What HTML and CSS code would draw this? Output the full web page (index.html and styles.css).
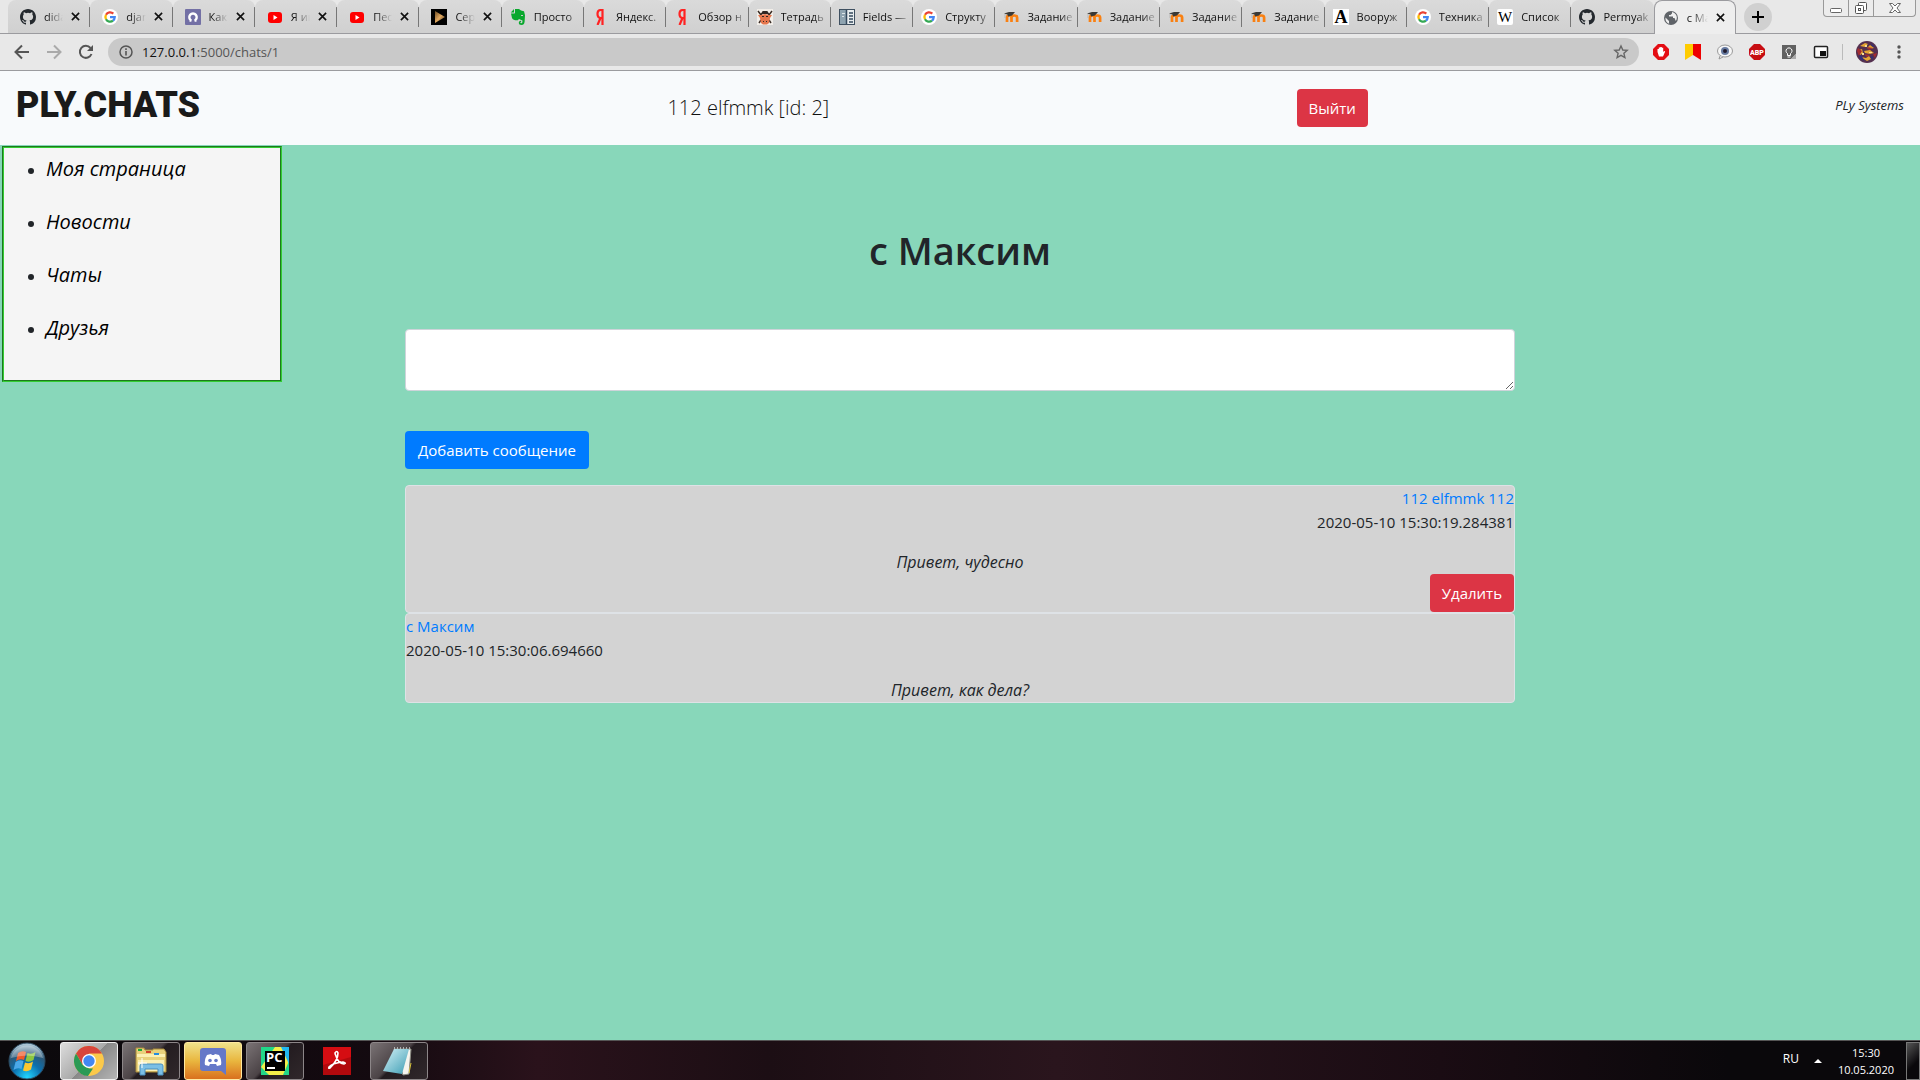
FILE: index.html
```html
<!DOCTYPE html>
<html lang="ru">
<head>
<meta charset="utf-8">
<title>с Максим</title>
<link rel="stylesheet" href="styles.css">
</head>
<body>
<svg class="sprite" aria-hidden="true">
  <defs>
    <linearGradient id="gold" x1="0" y1="0" x2="1" y2="1"><stop offset="0" stop-color="#6b4a22"/><stop offset=".5" stop-color="#e0a860"/><stop offset="1" stop-color="#4a3014"/></linearGradient>
    <linearGradient id="paper" x1="0" y1="0" x2="1" y2="1"><stop offset="0" stop-color="#d4f1f6"/><stop offset="1" stop-color="#3c9db4"/></linearGradient>
    <radialGradient id="orb" cx=".5" cy=".95" r=".9"><stop offset="0" stop-color="#22d6ff"/><stop offset=".45" stop-color="#0b6fae"/><stop offset=".75" stop-color="#2b5878"/><stop offset="1" stop-color="#a9c3d4"/></radialGradient>
  </defs>
  <symbol id="github" viewBox="0 0 16 16"><path fill="#24292e" d="M8 0C3.58 0 0 3.58 0 8c0 3.54 2.29 6.53 5.47 7.59.4.07.55-.17.55-.38 0-.19-.01-.82-.01-1.49-2.01.37-2.53-.49-2.69-.94-.09-.23-.48-.94-.82-1.13-.28-.15-.68-.52-.01-.53.63-.01 1.08.58 1.23.82.72 1.21 1.87.87 2.33.66.07-.52.28-.87.51-1.07-1.78-.2-3.64-.89-3.64-3.95 0-.87.31-1.59.82-2.15-.08-.2-.36-1.02.08-2.12 0 0 .67-.21 2.2.82a7.4 7.4 0 0 1 4 0c1.53-1.04 2.2-.82 2.2-.82.44 1.1.16 1.92.08 2.12.51.56.82 1.27.82 2.15 0 3.07-1.87 3.75-3.65 3.95.29.25.54.73.54 1.48 0 1.07-.01 1.93-.01 2.2 0 .21.15.46.55.38A8.01 8.01 0 0 0 16 8c0-4.42-3.58-8-8-8z"/></symbol>
  <symbol id="google" viewBox="0 0 16 16"><circle cx="8" cy="8" r="8" fill="#fff"/><g fill="none" stroke-width="2.3"><path stroke="#ea4335" d="M4 5.8A4.7 4.7 0 0 1 11.3 4.7"/><path stroke="#fbbc05" d="M4 5.8a4.7 4.7 0 0 0 0 4.4"/><path stroke="#34a853" d="M4 10.2a4.7 4.7 0 0 0 7 1.4"/><path stroke="#4285f4" d="M8 8.2h4.7a4.7 4.7 0 0 1-1.7 3.4"/></g></symbol>
  <symbol id="arch" viewBox="0 0 16 16"><rect width="16" height="16" rx="1" fill="#7370a5"/><path fill="none" stroke="#fff" stroke-width="2.4" d="M4.5 11.5h1.8A3.7 3.7 0 1 1 9.7 11.500h1.8"/></symbol>
  <symbol id="youtube" viewBox="0 0 16 16"><rect x="1" y="3" width="14" height="11" rx="3" fill="#f00"/><path fill="#fff" d="M6.5 6v5l4-2.5z"/></symbol>
  <symbol id="serial" viewBox="0 0 16 16"><rect width="16" height="16"/><path fill="url(#gold)" d="M4 2v12l10-6z"/></symbol>
  <symbol id="evernote" viewBox="0 0 16 16"><path fill="#0aa82e" d="M5 0h4l2 1.500 3 .7 1 4-.4 6.500q-.4 3.300-3 3.300-3 0-2.800-2.500.2-2 2.300-1.800v1.200q-1 0-.9.7.2.7 1.300.6 1.200-.2 1-2.700L9 10l-1.200 1.300Q3 11.500 2 9L1 4.500h3.500L5 4zM4 0v3.600H.8z"/><path stroke="#ccc" d="M11 6.500h2"/></symbol>
  <symbol id="yandex" viewBox="0 0 16 16"><path fill="none" stroke="#f22" stroke-width="2.2" d="M10.500 16V1H9C6.500 1 5.500 3 5.500 5s1 4 3.500 4h1.500M8.500 9l-3 7"/></symbol>
  <symbol id="ox" viewBox="0 0 16 16"><rect width="16" height="16" fill="#f2eee9"/><path stroke="#3a2c25" stroke-width="1.500" d="M1 2l3 4 2-3h4l2 3 3-4M2 14l2-3M14 14l-2-3" fill="none"/><path fill="#e5764d" d="M1 6h3l4-1 4 1h3l-2 3-1 5-2 1.500H6L4 14 3 9z"/><path fill="#302825" d="M4 5l2-3h4l2 3zM5 7h2v1H5zM9 7h2v1H9zM6 12h1v1H6zM9 12h1v1H9z"/></symbol>
  <symbol id="docs" viewBox="0 0 16 16"><rect x=".5" y=".5" width="15" height="15" fill="#e8edef" stroke="#3f5060"/><path fill="#8ea3b0" d="M1 1h6v14H1z"/><path stroke="#34495e" stroke-width="1.500" d="M7.500 1v14M10 4h4M10 7h4M10 10h4M10 13h4"/><path stroke="#dce4e8" d="M3 4.500h3M3 7.500h2"/></symbol>
  <symbol id="moodle" viewBox="0 0 16 16"><path fill="none" stroke="#f98012" stroke-width="2.700" d="M4 13V8.500q0-2 2.200-2 2.300 0 2.300 2V13M8.500 8.500q0-2 2.800-2t2.800 2V13"/><path fill="#3a3936" d="M1 4.500L6 3h6L9 6.500l-4 1-.5-2z"/><path stroke="#aaa" stroke-width=".6" d="M2 5v4"/></symbol>
  <symbol id="globe" viewBox="0 0 16 16"><circle cx="8" cy="8" r="7" fill="#5f6368"/><path fill="#f0f0f0" d="M2.500 7.500l3.500 3.500v2.500l1 .5A6 6 0 0 1 2.500 7.500zM9 2v1.500L7.500 5H6v1.500h4V8h1.500l1.300 3A5.800 5.800 0 0 0 9 2z"/></symbol>
  <symbol id="close" viewBox="0 0 10 10"><path stroke="#111" stroke-width="1.800" d="M1 1l8 8M9 1L1 9"/></symbol>
</svg>

<header class="browser">
  <div class="tabstrip">
    <nav class="tabs" aria-label="Вкладки">
      <div class="tab roomy"><svg class="favicon"><use href="#github"/></svg><span class="tab-title">dida</span><button class="tab-close" aria-label="Закрыть"><svg><use href="#close"/></svg></button></div>
      <div class="tab roomy"><svg class="favicon"><use href="#google"/></svg><span class="tab-title">djan</span><button class="tab-close" aria-label="Закрыть"><svg><use href="#close"/></svg></button></div>
      <div class="tab roomy"><svg class="favicon"><use href="#arch"/></svg><span class="tab-title">Как</span><button class="tab-close" aria-label="Закрыть"><svg><use href="#close"/></svg></button></div>
      <div class="tab roomy"><svg class="favicon"><use href="#youtube"/></svg><span class="tab-title">Я ин</span><button class="tab-close" aria-label="Закрыть"><svg><use href="#close"/></svg></button></div>
      <div class="tab roomy"><svg class="favicon"><use href="#youtube"/></svg><span class="tab-title">Пес</span><button class="tab-close" aria-label="Закрыть"><svg><use href="#close"/></svg></button></div>
      <div class="tab roomy"><svg class="favicon"><use href="#serial"/></svg><span class="tab-title">Сер</span><button class="tab-close" aria-label="Закрыть"><svg><use href="#close"/></svg></button></div>
      <div class="tab"><svg class="favicon"><use href="#evernote"/></svg><span class="tab-title">Просто</span></div>
      <div class="tab"><svg class="favicon"><use href="#yandex"/></svg><span class="tab-title">Яндекс.</span></div>
      <div class="tab"><svg class="favicon"><use href="#yandex"/></svg><span class="tab-title">Обзор н</span></div>
      <div class="tab"><svg class="favicon"><use href="#ox"/></svg><span class="tab-title">Тетрадь</span></div>
      <div class="tab"><svg class="favicon"><use href="#docs"/></svg><span class="tab-title">Fields —</span></div>
      <div class="tab"><svg class="favicon"><use href="#google"/></svg><span class="tab-title">Структу</span></div>
      <div class="tab"><svg class="favicon"><use href="#moodle"/></svg><span class="tab-title">Задание</span></div>
      <div class="tab"><svg class="favicon"><use href="#moodle"/></svg><span class="tab-title">Задание</span></div>
      <div class="tab"><svg class="favicon"><use href="#moodle"/></svg><span class="tab-title">Задание</span></div>
      <div class="tab"><svg class="favicon"><use href="#moodle"/></svg><span class="tab-title">Задание</span></div>
      <div class="tab"><svg class="favicon" viewBox="0 0 16 16"><rect width="16" height="16" fill="#fff"/><text x="8" y="14" text-anchor="middle" font-family="Liberation Serif, serif" font-size="18" font-weight="700">A</text></svg><span class="tab-title">Вооруж</span></div>
      <div class="tab"><svg class="favicon"><use href="#google"/></svg><span class="tab-title">Техника</span></div>
      <div class="tab"><svg class="favicon" viewBox="0 0 16 16"><rect width="16" height="16" rx="2" fill="#fff"/><text x="8" y="13" text-anchor="middle" font-family="Liberation Serif, serif" font-size="15">W</text></svg><span class="tab-title">Список</span></div>
      <div class="tab"><svg class="favicon"><use href="#github"/></svg><span class="tab-title">Permyak</span></div>
      <div class="tab active"><svg class="favicon"><use href="#globe"/></svg><span class="tab-title">с Ма</span><button class="tab-close" aria-label="Закрыть"><svg><use href="#close"/></svg></button></div>
    </nav>
    <button class="new-tab" aria-label="Новая вкладка"><svg width="12" height="12"><path stroke="#000" stroke-width="2" d="M6 0v12M0 6h12"/></svg></button>
    <div class="window-controls">
      <button aria-label="Свернуть"><svg width="14" height="14"><rect x="1.500" y="7.500" width="11" height="4" rx="1" fill="#fff" stroke="#666"/></svg></button>
      <button aria-label="Развернуть"><svg width="14" height="14" fill="#fff" stroke="#555"><rect x="4.500" y="1.500" width="8" height="8" rx="1"/><rect x="1.500" y="4.500" width="8" height="8" rx="1"/><rect x="4.500" y="7.500" width="2" height="2"/></svg></button>
      <button aria-label="Закрыть окно"><svg width="14" height="14"><path fill="#fff" stroke="#666" d="M1.500 2.500h3L7 5l2.500-2.500h3L9 7l3.500 4.500h-3L7 9l-2.500 2.500h-3L5 7z"/></svg></button>
    </div>
  </div>
  <div class="toolbar">
    <div class="nav-buttons">
      <button aria-label="Назад"><svg width="16" height="16" fill="none" stroke="#555" stroke-width="2"><path d="M15 8H2M8 1.500L1.500 8 8 14.500"/></svg></button>
      <button aria-label="Вперёд"><svg width="16" height="16" fill="none" stroke="#aaa" stroke-width="2"><path d="M1 8h13M8 1.500L14.500 8 8 14.500"/></svg></button>
      <button aria-label="Обновить"><svg width="16" height="16"><path fill="none" stroke="#555" stroke-width="2" d="M13.500 10A6 6 0 1 1 12.500 4"/><path fill="#555" d="M15 1v6H9z"/></svg></button>
    </div>
    <div class="omnibox">
      <svg width="16" height="16"><circle cx="8" cy="8" r="6" fill="none" stroke="#555" stroke-width="1.500"/><path stroke="#555" stroke-width="1.600" d="M8 7v4.500M8 4.300v1.600"/></svg>
      <span class="url"><b>127.0.0.1</b>:5000/chats/1</span>
      <svg width="16" height="16"><path fill="none" stroke="#666" stroke-width="1.400" d="M8 2l1.800 4 4.400.4-3.300 2.900 1 4.200L8 11.300l-3.900 2.200 1-4.200-3.300-2.900L6.200 6z"/></svg>
    </div>
    <div class="extensions">
      <button aria-label="AdBlock"><svg width="16" height="16"><path fill="#e40d13" d="M5 0h6l5 5v6l-5 5H5l-5-5V5z"/><path fill="#fff" d="M4.500 8V5h1.300V3.500h1.500V3h1.500v.8h1.400V8l1-.9 1 .5L10 12.500H6z"/></svg></button>
      <button aria-label="Закладки"><svg width="16" height="16"><path fill="#fc0" d="M0 0h8v11l-8 5z"/><path fill="#e00" d="M8 0h8v16l-8-5z"/></svg></button>
      <button aria-label="Просмотр"><svg width="16" height="16"><ellipse cx="8" cy="7" rx="7.500" ry="6" fill="#f6f6f6" stroke="#999"/><path fill="#eee" stroke="#999" d="M3 12l-1 3 4-2"/><circle cx="8" cy="7" r="4" fill="#667aa0"/><circle cx="8" cy="7" r="2" fill="#201a2c"/></svg></button>
      <button aria-label="Adblock Plus"><svg width="16" height="16"><path fill="#c70d12" d="M5 0h6l5 5v6l-5 5H5l-5-5V5z"/><text x="8" y="11" text-anchor="middle" font-family="Roboto, sans-serif" font-size="7" font-weight="900" fill="#fff">ABP</text></svg></button>
      <button aria-label="Подсказки"><svg width="16" height="16"><path fill="#616161" d="M1 1h14v9l-5 5H1z"/><path fill="#aaa" d="M15 10v5h-5z"/><path fill="none" stroke="#fff" d="M6.500 9.500a3 3 0 1 1 3 0v2h-3zM6.500 13h3"/></svg></button>
      <button aria-label="Картинка в картинке"><svg width="16" height="16"><rect x="1.500" y="2.500" width="13" height="11" rx="1" fill="#fff" stroke="#222" stroke-width="1.500"/><path fill="#111" d="M7 7h6v5H7z"/></svg></button>
      <span class="divider"></span>
      <button class="avatar" aria-label="Профиль"><svg width="22" height="22"><circle cx="11" cy="11" r="11" fill="#54304f"/><path fill="#e6a632" d="M4 5l5-3 3 1-3 3zM14 4l4 3-4 1-3-1zM3 9l3-1 1 4-3 2zM8 10l6-1 4 3-4 1-5-1zM5 16l5 1 3-2 2 3-4 2z"/><path fill="#a32c31" d="M2 7l4 3-3 5-2-5zM11 6l6 1-4 2zM8 13l6 1-3 2zM17 13l4-1-2 5z"/><path fill="#30307b" d="M3 14l3 1 2 5-4-2zM15 2l4 4-3-1zM14 15l3 1-1 3z"/><path fill="#f3dc96" d="M9 4h2v2H9zM13 11h3v1h-3zM6 12h2v2H6z"/></svg></button>
      <button aria-label="Меню"><svg width="16" height="16" fill="#555"><circle cx="8" cy="3" r="1.700"/><circle cx="8" cy="8" r="1.700"/><circle cx="8" cy="13" r="1.700"/></svg></button>
    </div>
  </div>
</header>

<div class="page">
  <header class="site-header">
    <a class="brand" href="#">PLY.CHATS</a>
    <span class="user">112 elfmmk [id: 2]</span>
    <button class="btn btn-danger">Выйти</button>
    <span class="company">PLy Systems</span>
  </header>
  <div class="layout">
    <nav class="sidebar">
      <ul>
        <li><a href="#">Моя страница</a></li>
        <li><a href="#">Новости</a></li>
        <li><a href="#">Чаты</a></li>
        <li><a href="#">Друзья</a></li>
      </ul>
    </nav>
    <main>
      <h1>с Максим</h1>
      <form>
        <textarea aria-label="Сообщение"></textarea>
        <button class="btn btn-primary" type="button">Добавить сообщение</button>
      </form>
      <article class="message own">
        <a href="#">112 elfmmk 112</a>
        <time>2020-05-10 15:30:19.284381</time>
        <p>Привет, чудесно</p>
        <button class="btn btn-danger">Удалить</button>
      </article>
      <article class="message">
        <a href="#">с Максим</a>
        <time>2020-05-10 15:30:06.694660</time>
        <p>Привет, как дела?</p>
      </article>
    </main>
  </div>
</div>

<footer class="taskbar">
  <button class="start" aria-label="Пуск"><svg width="38" height="38"><circle cx="19" cy="19" r="18" fill="url(#orb)" stroke="#2c4a60"/><path fill="#f0592a" d="M10 11q4-3 8-1l-2 8q-4-2-8 1z"/><path fill="#8cc63f" d="M19.500 11q4 2 8-1l-2 8q-4 3-8 1z"/><path fill="#4aa8e8" d="M7.500 20q4-3 8-1l-2 8q-4-2-8 1z"/><path fill="#fdc82f" d="M17 20.500q4 2 8-1l-2 8q-4 3-8 1z"/><path fill="#fff" opacity=".3" d="M3 16a16.500 16.500 0 0 1 32 0q-16-5-32 0z"/></svg></button>
  <button class="task chrome" aria-label="Chrome"><svg width="30" height="30"><circle cx="15" cy="15" r="15" fill="#fbc94a"/><path fill="#d8453c" d="M2 7.500A15 15 0 0 1 28 7.500H15l-6.500 11.300z"/><path fill="#2a9a55" d="M2 7.500l6.500 11.300L15 22.500h4L14 30A15 15 0 0 1 2 7.500z"/><circle cx="15" cy="15" r="7" fill="#fff"/><circle cx="15" cy="15" r="5.700" fill="#4387f2"/></svg></button>
  <button class="task" aria-label="Проводник"><svg width="34" height="30"><path fill="#e9d27c" stroke="#a98b3a" d="M2 5V2h8l1 2h8v-1h11l2 3v20H2z"/><path fill="#fbf0b4" d="M3 8h28v3H3zM4 14h26v11H4z"/><path fill="#1fa838" d="M4 3h4v2H4z"/><path fill="#d2422b" d="M12 5h5v2h-5z"/><path fill="#258ce0" d="M20 7h5v2h-5z"/><path fill="#7bbfe5" stroke="#4a8fbf" d="M6 29V20q0-2 2-2h19q2 0 2 2v9h-5v-6H11v6z"/><path stroke="#fff" d="M8 12v10M4 17h9"/></svg></button>
  <button class="task discord" aria-label="Discord"><svg width="26" height="28"><path fill="#6578c8" d="M3 1h20q3 0 3 3v24l-5-4H3q-3 0-3-3V4q0-3 3-3z"/><path fill="#fff" d="M7 8l4-1 1 1h2l1-1 4 1q3 5 2 10l-4 1-1-2H10l-1 2-4-1q-1-5 2-10z"/><circle cx="10" cy="13.500" r="1.800" fill="#6578c8"/><circle cx="16" cy="13.500" r="1.800" fill="#6578c8"/></svg></button>
  <button class="task" aria-label="PyCharm"><svg width="28" height="28"><path fill="#20d789" d="M0 0h28v28H0z"/><path fill="#f3ee49" d="M14 0h8l6 14-6 14H8l-8-8z"/><path fill="#21b8f0" d="M20 0h8v17z"/><path d="M4 4h20v20H4z"/><path fill="#fff" d="M6 20h8v2H6z"/><text x="5" y="15" font-family="Open Sans, sans-serif" font-size="13" font-weight="700" fill="#fff">PC</text></svg></button>
  <button class="task plain" aria-label="Acrobat"><svg width="28" height="28"><path fill="#d50d12" d="M0 0h28v28H0z"/><path fill="#8f0508" opacity=".5" d="M0 18l28-8v18H0z"/><path fill="none" stroke="#fff" stroke-width="1.600" d="M12 6q2-3 3 0 0 7-8 15-2 1-1-1 3-4 14-5 4 1 1 2-6-1-8-8-1-2-1-3z"/></svg></button>
  <button class="task" aria-label="Блокнот"><svg width="32" height="30"><path fill="#f4f4ee" stroke="#8a8a80" d="M11 3h17l-2 25-6 1z"/><path fill="url(#paper)" d="M11 3h15l-7 25-19-3z"/><path stroke="#ccc" stroke-width="1.500" stroke-dasharray="1 2" d="M11 2h17"/><path stroke="#d5c13c" d="M28 17l-2 10"/></svg></button>
  <div class="tray">
    <span class="lang">RU</span>
    <button class="tray-more" aria-label="Скрытые значки"><svg width="8" height="4"><path fill="#fff" d="M4 0l4 4H0z"/></svg></button>
    <div class="clock"><span>15:30</span><span>10.05.2020</span></div>
    <button class="show-desktop" aria-label="Показать рабочий стол"></button>
  </div>
</footer>
</body>
</html>
```
FILE: styles.css
```css
* { box-sizing: border-box; }

body {
  margin: 0;
  min-height: 100vh;
  display: flex;
  flex-direction: column;
  font: 15px/24px "Open Sans", "Noto Sans", sans-serif;
  color: #212529;
  background: #88d7ba;
}

button {
  padding: 0;
  border: 0;
  background: none;
  font: inherit;
  color: inherit;
}

svg { display: block; flex: none; }
a { text-decoration: none; }
.sprite { position: absolute; width: 0; height: 0; }

/* Browser window */
.browser {
  background: #e8e8e8;
  border-bottom: 1px solid #9b9b9f;
}
.tabstrip {
  display: flex;
  height: 34px;
  padding: 0 4px 0 8px;
  border-bottom: 1px solid #9b9b9f;
}
.tabs {
  display: grid;
  grid-template-columns: repeat(21, minmax(0, 1fr));
  flex: 1;
  min-width: 0;
}
.tab {
  display: flex;
  align-items: center;
  height: 33px;
  padding: 0 2px 0 8px;
  gap: 8px;
  border-radius: 8px 8px 0 0;
  background: linear-gradient(#777, #777) right center / 1px 20px no-repeat, linear-gradient(#dadada, #d0d0d0);
  font-size: 11px;
  color: #111;
}
.tab.roomy { padding: 0 10px 0 12px; }
.tab.active {
  height: 34px;
  padding-right: 10px;
  border: 1px solid #9b9b9f;
  border-bottom: 0;
  background: #eee;
}
.tab:nth-last-child(2) { background: linear-gradient(#dadada, #d0d0d0); }
.favicon { width: 16px; height: 16px; }
.tab-title {
  flex: 1;
  min-width: 0;
  white-space: nowrap;
  mask-image: linear-gradient(to left, transparent, #000 16px);
}
.tab-close svg { width: 9px; height: 9px; }
.new-tab {
  display: grid;
  place-items: center;
  width: 28px;
  height: 28px;
  margin: 3px 51px 0 8px;
  border-radius: 50%;
  background: #d0d0d0;
}
.window-controls {
  display: grid;
  grid-template-columns: 24px 25px 42px;
  height: 17px;
  border: 1px solid #999;
  border-top: 0;
  border-radius: 0 0 4px 4px;
  background: #ececec;
}
.window-controls button { display: grid; place-items: center; }
.window-controls button + button { border-left: 1px solid #999; }

.toolbar {
  display: flex;
  align-items: center;
  height: 36px;
  padding: 0 13px 0 14px;
}
.nav-buttons { display: flex; gap: 16px; }
.omnibox {
  display: flex;
  align-items: center;
  flex: 1;
  height: 28px;
  margin: 0 14px;
  padding: 0 10px;
  gap: 8px;
  border-radius: 14px;
  background: #c9c9c9;
}
.url { flex: 1; font-size: 13px; color: #555; }
.url b { font-weight: 400; color: #111; }
.extensions { display: flex; align-items: center; gap: 16px; }
.divider { width: 1px; height: 16px; margin: 0 -3px; background: #bbb; }
.avatar { margin-right: -3px; }

/* Site */
.page { flex: 1; }
.site-header {
  display: flex;
  align-items: center;
  justify-content: space-between;
  height: 74px;
  padding: 0 16px;
  background: #f8fafc;
}
.brand,
.company { padding-bottom: 6px; }
.brand {
  font: 900 36px/40px Roboto, sans-serif;
  color: #1a1a1a;
}
.user { font-size: 20px; font-weight: 300; color: #111; }
.company { font-size: 13px; font-style: italic; }

.btn {
  height: 38px;
  padding: 0 13px;
  border-radius: 4px;
  color: #fff;
}
.btn-danger { padding: 0 12px; background: #dc3545; }
.btn-primary { background: #007bff; }

.layout {
  display: grid;
  grid-template-columns: 1fr minmax(0, 1110px) 1fr;
  align-items: start;
}
.sidebar {
  max-width: 280px;
  margin: 1px 2px;
  border: 2px groove limegreen;
  background: #f5f5f5;
}
.sidebar ul {
  display: flex;
  flex-direction: column;
  gap: 26px;
  margin: 0;
  padding: 7px 0 39px 42px;
}
.sidebar li { font-size: 20px; line-height: 27px; }
.sidebar li::marker { font-size: 16px; }
.sidebar a { font-style: italic; color: #000; }

h1 {
  margin: 81px 0 55px;
  font-size: 38px;
  font-weight: 600;
  line-height: 48px;
  text-align: center;
}
form {
  display: flex;
  flex-direction: column;
  align-items: flex-start;
  gap: 40px;
  margin-bottom: 16px;
}
textarea {
  width: 100%;
  height: 62px;
  padding: 6px 12px;
  border: 1px solid #ced4da;
  border-radius: 4px;
  font: inherit;
}
.message {
  display: flex;
  flex-direction: column;
  align-items: flex-start;
  border: 1px solid #dee2e6;
  border-radius: 4px;
  background: #d3d3d3;
}
.message.own { align-items: flex-end; }
.message a { color: #007bff; }
.message p {
  align-self: center;
  margin: 16px 0 0;
  font-size: 16px;
  font-style: italic;
}

/* Taskbar */
.taskbar {
  display: flex;
  align-items: center;
  height: 40px;
  padding-left: 8px;
  gap: 4px;
  border-top: 1px solid #555;
  background: linear-gradient(90deg, #0b090c 0, #140a10 20%, #2a121b 28%, #1c0e14 40%, #2a151d 55%, #1a0c13 75%, #0a080b 90%);
  color: #fff;
}
.start { margin-right: 10px; }
.task {
  display: grid;
  place-items: center;
  width: 58px;
  height: 38px;
  border: 1px solid #8c8688;
  border-radius: 3px;
  background: linear-gradient(135deg, #7a7375 0, #4b4346 45%, #231c20 50%, #30282b 100%);
}
.task.chrome { border-color: #eee; background: linear-gradient(135deg, #ddd 0, #aaa 50%, #888 51%, #b5b5b5 100%); }
.task.discord { border-color: #ffe9a0; background: linear-gradient(#efe28a, #e9b63e 50%, #d9701e); }
.task.plain { border-color: transparent; background: none; }
.tray {
  display: flex;
  align-items: center;
  margin-left: auto;
  font-size: 12px;
}
.lang { margin: 0 15px 4px 0; }
.clock {
  display: flex;
  flex-direction: column;
  align-items: center;
  margin: 0 12px 0 16px;
  line-height: 17px;
}
.clock span { font-size: 11px; }
.show-desktop {
  width: 14px;
  height: 38px;
  border: 1px solid #777;
  background: linear-gradient(135deg, #555, #0a080b 60%);
}
```
